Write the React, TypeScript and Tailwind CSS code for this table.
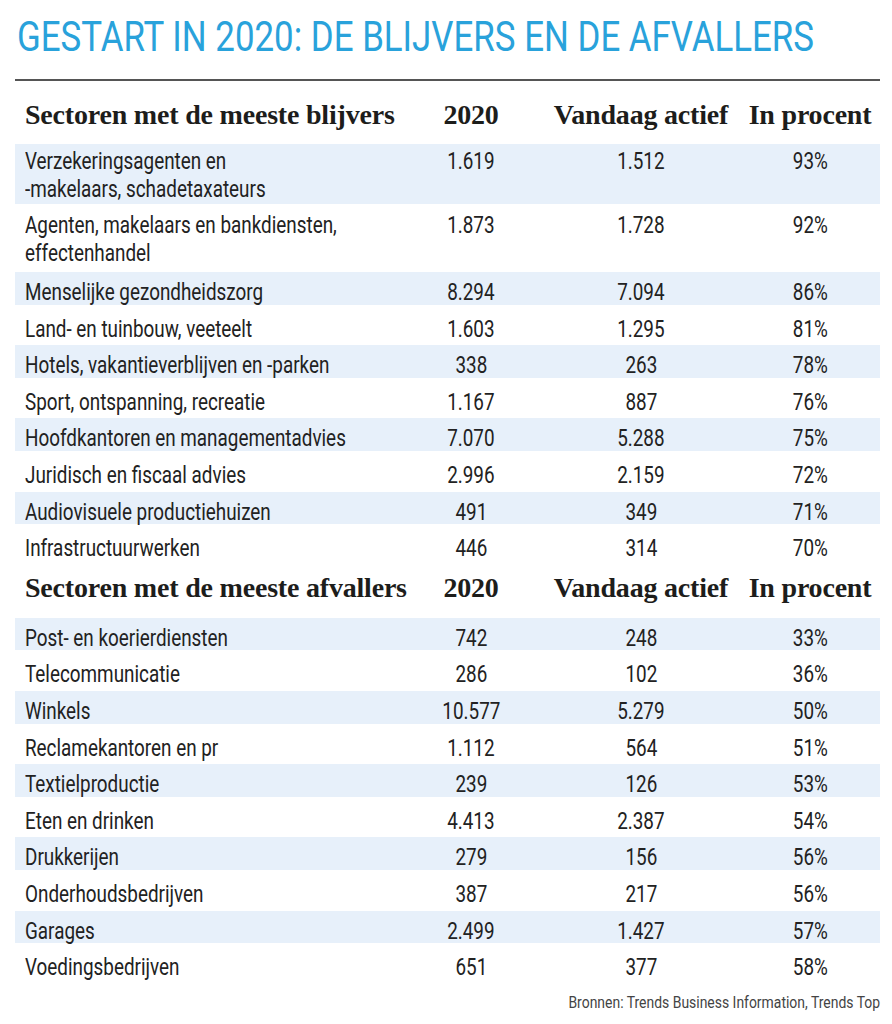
type Row = {
  name: string[];
  start: string;
  now: string;
  pct: string;
};

const blijvers: Row[] = [
  { name: ['Verzekeringsagenten en', '-makelaars, schadetaxateurs'], start: '1.619', now: '1.512', pct: '93%' },
  { name: ['Agenten, makelaars en bankdiensten,', 'effectenhandel'], start: '1.873', now: '1.728', pct: '92%' },
  { name: ['Menselijke gezondheidszorg'], start: '8.294', now: '7.094', pct: '86%' },
  { name: ['Land- en tuinbouw, veeteelt'], start: '1.603', now: '1.295', pct: '81%' },
  { name: ['Hotels, vakantieverblijven en -parken'], start: '338', now: '263', pct: '78%' },
  { name: ['Sport, ontspanning, recreatie'], start: '1.167', now: '887', pct: '76%' },
  { name: ['Hoofdkantoren en managementadvies'], start: '7.070', now: '5.288', pct: '75%' },
  { name: ['Juridisch en fiscaal advies'], start: '2.996', now: '2.159', pct: '72%' },
  { name: ['Audiovisuele productiehuizen'], start: '491', now: '349', pct: '71%' },
  { name: ['Infrastructuurwerken'], start: '446', now: '314', pct: '70%' },
];

const afvallers: Row[] = [
  { name: ['Post- en koerierdiensten'], start: '742', now: '248', pct: '33%' },
  { name: ['Telecommunicatie'], start: '286', now: '102', pct: '36%' },
  { name: ['Winkels'], start: '10.577', now: '5.279', pct: '50%' },
  { name: ['Reclamekantoren en pr'], start: '1.112', now: '564', pct: '51%' },
  { name: ['Textielproductie'], start: '239', now: '126', pct: '53%' },
  { name: ['Eten en drinken'], start: '4.413', now: '2.387', pct: '54%' },
  { name: ['Drukkerijen'], start: '279', now: '156', pct: '56%' },
  { name: ['Onderhoudsbedrijven'], start: '387', now: '217', pct: '56%' },
  { name: ['Garages'], start: '2.499', now: '1.427', pct: '57%' },
  { name: ['Voedingsbedrijven'], start: '651', now: '377', pct: '58%' },
];

const cols = 'grid grid-cols-[385px_142px_198px_140px]';

// no narrow sans installed, so squeeze Roboto horizontally
function Narrow({ children, origin = 'origin-left' }: { children: React.ReactNode; origin?: string }) {
  return <span className={`inline-block whitespace-nowrap scale-x-[0.82] ${origin}`}>{children}</span>;
}

function Header({ title, pb }: { title: string; pb: string }) {
  return (
    <div className={`${cols} h-full items-end ${pb} font-['Liberation_Serif',serif] text-[28px] font-bold leading-none tracking-[-0.2px] text-[#1d1d1b]`}>
      <div className="pl-[10px] whitespace-nowrap">{title}</div>
      <div className="text-center">2020</div>
      <div className="text-center whitespace-nowrap">Vandaag actief</div>
      <div className="text-center whitespace-nowrap">In procent</div>
    </div>
  );
}

function TableRow({ row, blue }: { row: Row; blue: boolean }) {
  const double = row.name.length > 1;
  return (
    <div
      className={`py-[2px] bg-clip-content ${blue ? 'bg-[#e7f0fa]' : 'bg-white'} ${
        double ? 'h-[64px]' : 'h-[36.6px]'
      }`}
    >
      <div className={`${cols} items-start leading-[28px] ${double ? 'pt-[4px]' : 'pt-[7px]'}`}>
        <div className="pl-[10px]">
          {row.name.map((line) => (
            <div key={line}>
              <Narrow>{line}</Narrow>
            </div>
          ))}
        </div>
        <div className="text-center">
          <Narrow origin="origin-center">{row.start}</Narrow>
        </div>
        <div className="text-center">
          <Narrow origin="origin-center">{row.now}</Narrow>
        </div>
        <div className="text-center">
          <Narrow origin="origin-center">{row.pct}</Narrow>
        </div>
      </div>
    </div>
  );
}

export default function App() {
  return (
    <div className="w-[892px] h-[1024px] bg-white overflow-hidden font-['Roboto',sans-serif] text-[#222]">
      <h1 className="pt-[16px] pl-[17px] text-[42px] leading-none font-normal text-[#29a2db]">
        <span className="inline-block whitespace-nowrap scale-x-[0.83] origin-left">
          GESTART IN 2020: DE BLIJVERS EN DE AFVALLERS
        </span>
      </h1>

      <div className="ml-[15px] mr-[12px]">
        <div className="mt-[21px] h-[2px] bg-[#555]" />

        <div className="h-[61px]">
          <Header title="Sectoren met de meeste blijvers" pb="pb-[13px]" />
        </div>
        <div className="text-[23px]">
          {blijvers.map((row, i) => (
            <TableRow key={row.name[0]} row={row} blue={i % 2 === 0} />
          ))}
        </div>

        <div className="h-[53px]">
          <Header title="Sectoren met de meeste afvallers" pb="pb-[14px]" />
        </div>
        <div className="text-[23px]">
          {afvallers.map((row, i) => (
            <TableRow key={row.name[0]} row={row} blue={i % 2 === 0} />
          ))}
        </div>

        <div className="mt-[10px] text-right text-[17px] leading-[20px] text-[#444]">
          <Narrow origin="origin-right">Bronnen: Trends Business Information, Trends Top</Narrow>
        </div>
      </div>
    </div>
  );
}
